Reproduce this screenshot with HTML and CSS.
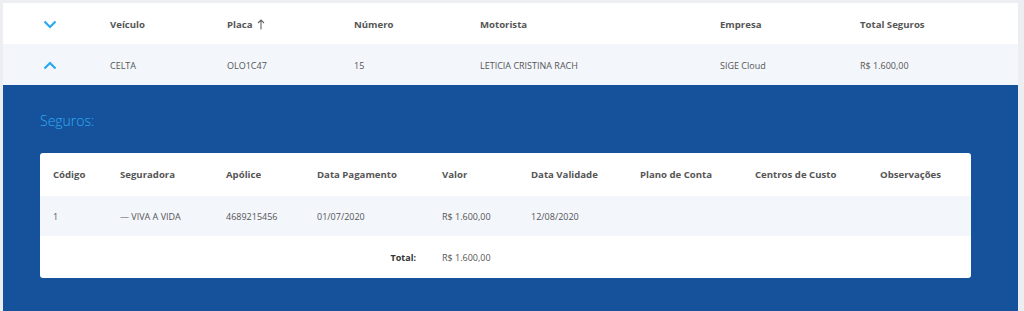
FILE: index.html
```html
<!DOCTYPE html>
<html lang="pt-BR">
<head>
<meta charset="utf-8">
<link rel="stylesheet" href="styles.css">
</head>
<body>
<div class="wrap">
  <div class="grid main head">
    <div class="chev"><svg width="14" height="9" viewBox="0 0 14 9"><path d="M1.5 1.5 L7 7 L12.5 1.5" fill="none" stroke="#2aa8f2" stroke-width="2.2"/></svg></div>
    <div>Veículo</div>
    <div class="sort">Placa <svg width="8" height="11" viewBox="0 0 8 11"><path d="M4 10.5 V1 M1 4 L4 1 L7 4" fill="none" stroke="#666" stroke-width="1.1"/></svg></div>
    <div>Número</div>
    <div>Motorista</div>
    <div>Empresa</div>
    <div>Total Seguros</div>
  </div>
  <div class="grid main row">
    <div class="chev"><svg width="14" height="9" viewBox="0 0 14 9"><path d="M1.5 7.5 L7 2 L12.5 7.5" fill="none" stroke="#2aa8f2" stroke-width="2.2"/></svg></div>
    <div>CELTA</div>
    <div>OLO1C47</div>
    <div>15</div>
    <div>LETICIA CRISTINA RACH</div>
    <div>SIGE Cloud</div>
    <div>R$ 1.600,00</div>
  </div>
  <div class="panel">
    <h2 class="title">Seguros:</h2>
    <div class="card">
      <div class="grid sub head">
        <div>Código</div>
        <div>Seguradora</div>
        <div>Apólice</div>
        <div>Data Pagamento</div>
        <div>Valor</div>
        <div>Data Validade</div>
        <div>Plano de Conta</div>
        <div>Centros de Custo</div>
        <div>Observações</div>
      </div>
      <div class="grid sub row">
        <div>1</div>
        <div>— VIVA A VIDA</div>
        <div>4689215456</div>
        <div>01/07/2020</div>
        <div>R$ 1.600,00</div>
        <div>12/08/2020</div>
        <div></div>
        <div></div>
        <div></div>
      </div>
      <div class="grid sub total">
        <div class="total-label">Total:</div>
        <div>R$ 1.600,00</div>
      </div>
    </div>
  </div>
</div>
</body>
</html>
```

FILE: styles.css
```css
html, body {
  margin: 0;
  padding: 0;
  background: #eceef1;
}
body {
  padding: 3px 6px 0 3px;
  font-family: "Open Sans", "Liberation Sans", sans-serif;
  font-size: 9px;
  color: #555;
}
.wrap {
  width: 1015px;
}
.grid {
  display: grid;
  align-items: center;
}
.head {
  font-size: 9.6px;
  font-weight: 700;
  color: #555;
}
.main {
  grid-template-columns: 107px 117px 127px 126px 240px 140px 1fr;
  height: 41px;
  box-sizing: border-box;
  padding-top: 2px;
}
.main.head {
  background: #fff;
}
.main.row {
  background: #f3f6fb;
}
.chev {
  padding-left: 40px;
  display: flex;
  align-items: center;
}
.sort {
  display: flex;
  align-items: center;
  gap: 5px;
}
.panel {
  background: #15529b;
  padding: 24px 47px 33px 37px;
}
.title {
  margin: 0 0 20px 0;
  font-size: 14px;
  font-weight: 300;
  color: #32aaf2;
  line-height: 24px;
}
.card {
  background: #fff;
  border-radius: 3px;
  overflow: hidden;
}
.sub {
  grid-template-columns: 67px 106px 91px 125px 89px 109px 115px 125px 1fr;
  padding-left: 13px;
}
.sub.head {
  height: 43px;
}
.sub.row {
  height: 40px;
  background: #f3f6fb;
}
.sub.total {
  height: 42px;
}
.total-label {
  grid-column: 1 / 5;
  text-align: right;
  padding-right: 26px;
  font-weight: 700;
  color: #333;
}
```
